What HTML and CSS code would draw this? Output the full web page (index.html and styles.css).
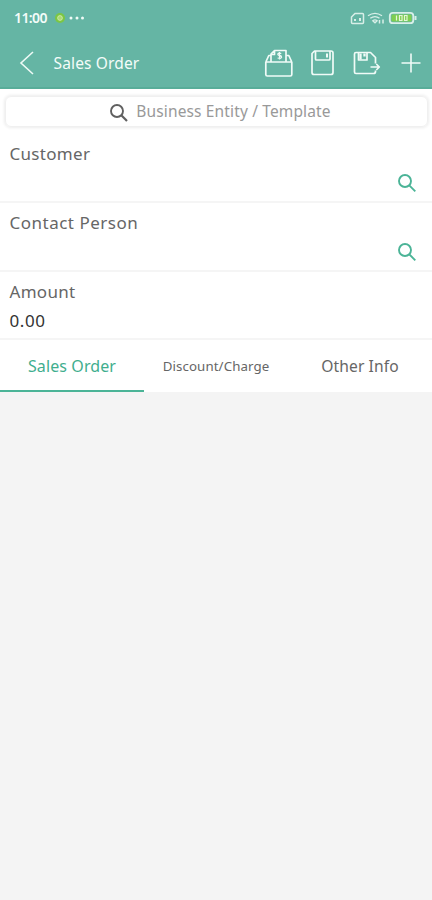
FILE: index.html
```html
<!DOCTYPE html>
<html lang="en">
<head>
<meta charset="utf-8">
<title>Sales Order</title>
<link rel="stylesheet" href="styles.css">
</head>
<body>
<header class="top">
  <div class="status">
    <span class="time">11:00</span>
    <svg class="notif" width="28" height="12" viewBox="0 0 28 12"><circle cx="6" cy="6" r="5" fill="#7cc644"/><circle cx="6" cy="6" r="2.4" fill="#a9d976" stroke="#d6efb3" stroke-width=".8"/><g fill="#f0fbf7"><circle cx="17" cy="6" r="1.5"/><circle cx="23" cy="6" r="1.5"/><circle cx="28.500" cy="6" r="1.5"/></g></svg>
    <svg class="system" width="68" height="16" viewBox="0 0 68 16" fill="none" stroke="#d9efe8">
      <path d="M1.500 12.500V7L5 3.500h7.500q1 0 1 1v8q0 1-1 1h-10q-1 0-1-1z" stroke-width="1.500"/><path d="M5 11V9M10 8v3" stroke-width="2"/>
      <path d="M18 5.800q7-5 14 0M20.300 8.300q4.700-3.400 9.200 0M22.800 10.700q2.200-1.600 4.300 0L25 12.800z" stroke-width="1.300"/><path d="M29.500 13.500V10M33 9.500v4" stroke-width="1.500"/>
      <rect x="39.800" y="2.800" width="23.500" height="10.400" rx="3" stroke-width="1.800"/><path d="M65.500 6v4" stroke-width="2"/>
      <rect x="41.500" y="4.500" width="20" height="7" rx="1.300" fill="#7fce50" stroke="none"/>
      <path d="M46.500 5.500v5M49.500 5.500h2.500v5h-2.500zM54.500 5.500H57v5h-2.500z" stroke="#e5f6d9" stroke-width="1.200"/>
    </svg>
  </div>
  <div class="bar">
    <svg class="back" width="16" height="26" viewBox="0 0 16 26" fill="none" stroke="#eefaf6" stroke-width="1.600"><path d="M14 2 2 13l12 11"/></svg>
    <h1>Sales Order</h1>
    <svg class="actions" width="160" height="30" viewBox="262 47.500 160 30" fill="none" stroke="#f0fbf7" stroke-width="1.700" stroke-linejoin="round">
      <path d="M265.800 61.500h26v12.500q0 1.500-1.500 1.500h-23q-1.500 0-1.500-1.500zM265.800 61.500l3-6.500h2M291.800 61.500l-3-6.500h-3M271 61v-7.500l3.500-3.500h11.500v11M271 54h3.500v-4"/>
      <path d="M281.300 53q-3-1.200-3.500.7 0 1 1.800 1.300 2 .4 2 1.700-.5 2-4 .8M279.500 51.500v7.500" stroke-width="1.300"/>
      <path d="M314.500 50.500h16.500q2 0 2 2v19.500q0 2-2 2H314q-2 0-2-2V53zM315.500 51v7.500q0 1 1 1h12.500q1 0 1-1V51"/><path d="M327 53v4" stroke-width="2"/>
      <path d="M375.500 63v-6l-5-5h-14.500q-1.500 0-1.500 1.500v18q0 1.500 1.500 1.500h17.500q2 0 2-2v-1M358.500 52v7.500h8.500v-7.500M370.500 66.500h8.500M376.300 63.500l3 3-3 3"/><path d="M360.500 53v6M364.500 53v3" stroke-width="2.300"/>
      <path d="M401.500 62.500h19M411 53v19" stroke-width="1.600"/>
    </svg>
  </div>
</header>
<main>
  <div class="search">
    <svg width="20" height="20" viewBox="0 0 20 20" fill="none" stroke="#606060" stroke-width="1.900"><circle cx="8" cy="8" r="6"/><path d="m12.300 12.300 5.700 5.700" stroke-width="2.200"/></svg>
    <span>Business Entity / Template</span>
  </div>
  <section class="field first"><label>Customer</label>
    <svg class="find" width="20" height="20" viewBox="0 0 20 20" fill="none" stroke="#4bb497" stroke-width="1.900"><circle cx="8" cy="8" r="6"/><path d="m12.300 12.300 6 6"/></svg>
  </section>
  <section class="field"><label class="contact">Contact Person</label>
    <svg class="find" width="20" height="20" viewBox="0 0 20 20" fill="none" stroke="#4bb497" stroke-width="1.900"><circle cx="8" cy="8" r="6"/><path d="m12.300 12.300 6 6"/></svg>
  </section>
  <section class="field amount"><label>Amount</label><output>0.00</output></section>
  <nav class="tabs"><span class="tab active">Sales Order</span><span class="tab small">Discount/Charge</span><span class="tab">Other Info</span></nav>
</main>
</body>
</html>
```
FILE: styles.css
```css
* { box-sizing: border-box; }
body { margin: 0; min-height: 900px; background: #f4f4f4; font-family: "Noto Sans", sans-serif; color: #666; }
svg { display: block; flex: none; overflow: visible; }
.top { height: 89px; background: #65b5a4; border-bottom: 2px solid #58ad99; color: #f4fcf9; }
.status { display: flex; align-items: center; height: 36px; padding: 0 14px; }
.time { width: 40px; font-size: 14px; font-weight: 600; letter-spacing: -.6px; line-height: 20px; white-space: nowrap; }
.system { margin-left: auto; }
.bar { display: flex; align-items: center; height: 53px; padding: 0 10px 0 19px; }
.bar h1 { margin: 0 0 0 18.500px; font-size: 15.500px; font-weight: 400; letter-spacing: .15px; white-space: nowrap; }
.actions { margin-left: auto; }
main { background: #fff; height: 303px; padding-top: 7px; }
.search { display: flex; align-items: center; justify-content: center; height: 31px; margin: 0 4px 0 5px; padding-left: 7px; border: 1px solid #f0f0f0; border-radius: 6px; box-shadow: 0 0 3px 1px #ededed; color: #999; font-size: 15.500px; letter-spacing: .14px; }
.search svg { margin: 3px 7px 0 0; }
.search span { padding-bottom: 1px; }
.field { position: relative; height: 69px; padding: 8px 9.500px 0; border-bottom: 2px solid #f5f5f5; }
.field.first { height: 76px; padding-top: 15px; }
.field.amount { height: 68px; }
.field label, .field output { display: block; height: 24px; line-height: 24px; font-size: 17px; letter-spacing: .3px; }
.field .contact { letter-spacing: .5px; }
.field label:only-of-type { color: #666; }
.field output { margin-top: 5px; color: #333; letter-spacing: .6px; }
.find { position: absolute; right: 15.500px; bottom: 8px; }
.tabs { display: flex; height: 52px; }
.tab { flex: 1; display: flex; align-items: center; justify-content: center; padding-top: 2px; border-bottom: 2px solid transparent; font-size: 15.600px; letter-spacing: .1px; white-space: nowrap; }
.tab.small { font-size: 13.300px; }
.tab.active { color: #3fae8e; border-color: #4bb497; font-size: 16px; }
```
